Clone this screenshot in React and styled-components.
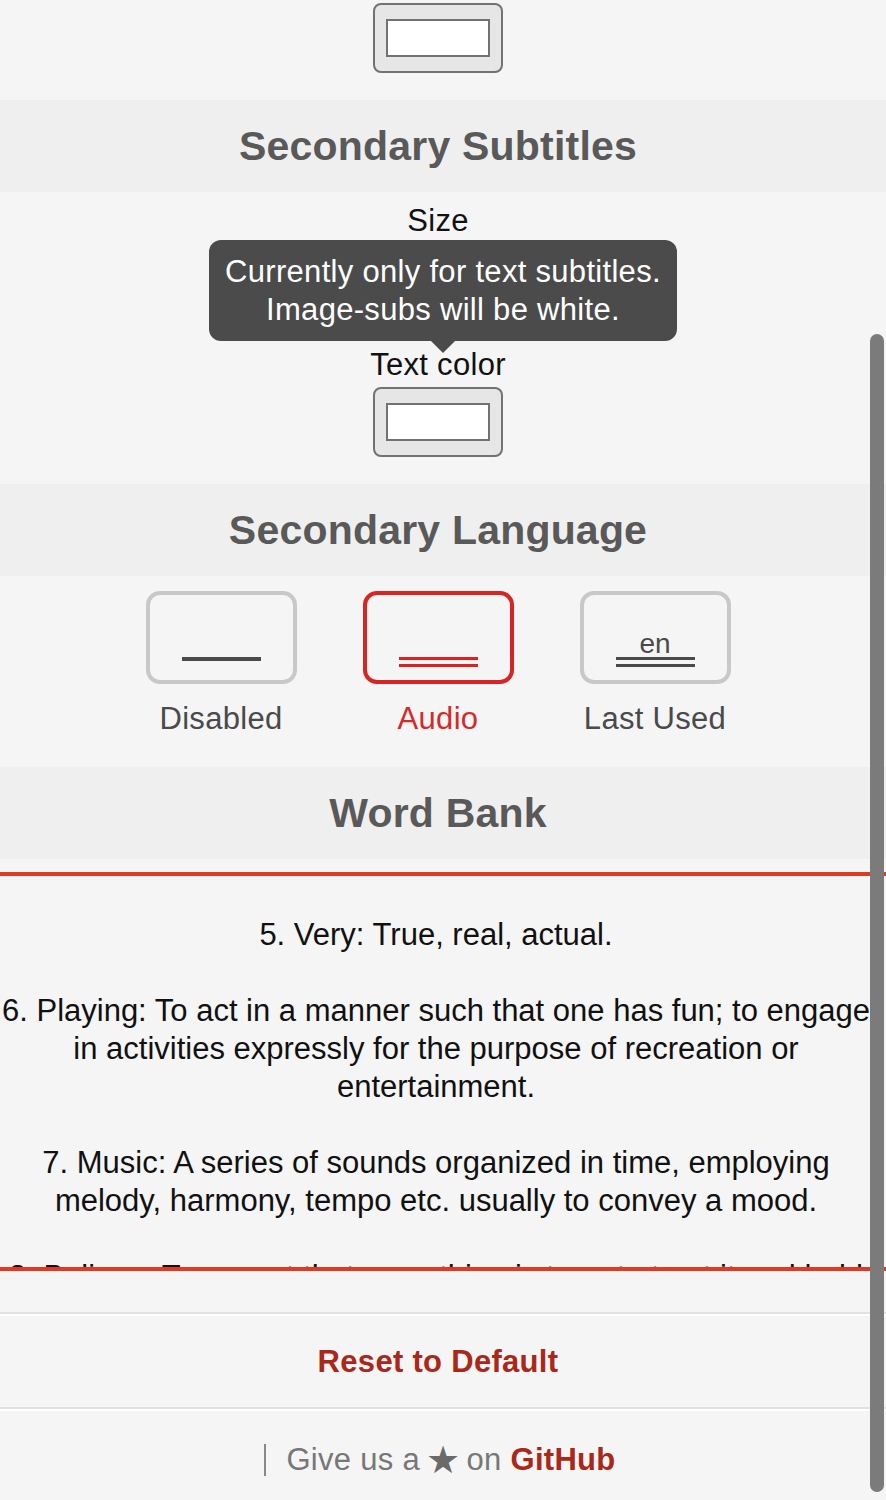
import styled, { createGlobalStyle } from "styled-components";

const GlobalStyle = createGlobalStyle`
  html, body {
    margin: 0;
    padding: 0;
    background: #f5f5f5;
    font-family: "Liberation Sans", Arial, sans-serif;
  }
`;

const Page = styled.div`
  position: relative;
  width: 886px;
  height: 1500px;
  overflow: hidden;
`;

const Section = styled.section`
  display: flex;
  flex-direction: column;
  align-items: center;
  padding: ${(p) => p.$pad || "0"};
  padding-right: 10px;
`;

const SectionHeader = styled.h2`
  margin: 0;
  height: 92px;
  display: flex;
  align-items: center;
  justify-content: center;
  padding-right: 10px;
  background: #efefef;
  color: #595959;
  font-size: 41px;
  letter-spacing: 0.2px;
  font-weight: 700;
`;

const Label = styled.div`
  font-size: 31px;
  letter-spacing: 0.3px;
  line-height: 34px;
  color: #111;
`;

const Swatch = styled.button`
  width: 130px;
  height: 70px;
  margin-top: ${(p) => p.$top || 0}px;
  padding: 0;
  display: flex;
  align-items: center;
  justify-content: center;
  background: #e6e6e6;
  border: 2px solid #727272;
  border-radius: 8px;
`;

const SwatchColor = styled.span`
  width: 104px;
  height: 38px;
  box-sizing: border-box;
  background: ${(p) => p.$color};
  border: 2px solid #727272;
`;

const SliderSlot = styled.div`
  position: relative;
  width: 100%;
  height: 110px;
`;

const Tooltip = styled.div`
  position: absolute;
  top: 2px;
  left: 209px;
  width: 468px;
  height: 101px;
  box-sizing: border-box;
  padding-top: 13px;
  background: #4b4b4b;
  border-radius: 12px;
  color: #fff;
  font-size: 31px;
  letter-spacing: 0.3px;
  line-height: 38px;
  text-align: center;

  &::after {
    content: "";
    position: absolute;
    left: 222px;
    bottom: -12px;
    border-left: 12px solid transparent;
    border-right: 12px solid transparent;
    border-top: 12px solid #4b4b4b;
  }
`;

const Options = styled.div`
  display: grid;
  grid-template-columns: repeat(3, 151px);
  column-gap: 66px;
`;

const Option = styled.div`
  display: flex;
  flex-direction: column;
  align-items: center;
  gap: 18px;
  color: ${(p) => (p.$active ? "#d42a2a" : "#4a4a4a")};
`;

const OptionBox = styled.div`
  width: 151px;
  height: 93px;
  box-sizing: border-box;
  border: 4px solid ${(p) => (p.$active ? "#d92424" : "#c8c8c8")};
  border-radius: 14px;
  display: flex;
  flex-direction: column;
  align-items: center;
  justify-content: flex-end;
  padding-bottom: 13px;
`;

const Lang = styled.span`
  font-size: 28px;
  line-height: 26px;
  color: #4a4a4a;
`;

const Line = styled.span`
  width: 79px;
  height: 10px;
  box-sizing: border-box;
  border-top: ${(p) => (p.$double ? "3px" : "4px")} solid ${(p) => p.$color};
  border-bottom: ${(p) => (p.$double ? `3px solid ${p.$color}` : "none")};
`;

const OptionLabel = styled.span`
  font-size: 31px;
  letter-spacing: 0.3px;
  line-height: 34px;
  white-space: nowrap;
`;

const WordList = styled.div`
  margin-top: 13px;
  height: 399px;
  box-sizing: border-box;
  overflow: hidden;
  border-top: 4px solid #e03a20;
  border-bottom: 4px solid #e03a20;
  padding: 40px 14px 0 0;
`;

const Word = styled.p`
  margin: 0 0 38px;
  font-size: 31px;
  line-height: 38px;
  color: #111;
  text-align: center;
`;

const Gap = styled.div`
  height: ${(p) => p.$h}px;
`;

const Divider = styled.hr`
  margin: 0;
  height: 0;
  border: none;
  border-top: 2px solid #e1e1e1;
  border-bottom: 2px solid #fff;
`;

const ResetButton = styled.button`
  display: block;
  width: 100%;
  height: 91px;
  padding: 0 10px 0 0;
  background: none;
  border: none;
  font-family: inherit;
  font-size: 31px;
  letter-spacing: 0.3px;
  font-weight: 700;
  color: #a9281a;
`;

const Footer = styled.footer`
  height: 88px;
  box-sizing: border-box;
  padding: 10px 6px 0 0;
  display: flex;
  align-items: center;
  justify-content: center;
  font-size: 31px;
  letter-spacing: 0.3px;
  color: #777;
`;

const Bar = styled.span`
  width: 2px;
  height: 32px;
  background: #888;
  margin-right: 20px;
`;

const Star = styled.span`
  font-size: 38px;
  line-height: 31px;
  color: #6a6a6a;
  margin: 0 6px;
`;

const Strong = styled.b`
  color: #a9281a;
  margin-left: 9px;
`;

const Scrollbar = styled.div`
  position: absolute;
  top: 334px;
  right: 2px;
  width: 14px;
  height: 1158px;
  border-radius: 7px;
  background: #7b7b7b;
`;

const words = [
  "5. Very: True, real, actual.",
  "6. Playing: To act in a manner such that one has fun; to engage in activities expressly for the purpose of recreation or entertainment.",
  "7. Music: A series of sounds organized in time, employing melody, harmony, tempo etc. usually to convey a mood.",
  "8. Believe: To accept that something is true, to trust it and hold it dear.",
];

export default function App() {
  return (
    <Page>
      <GlobalStyle />
      <Section $pad="3px 0 27px">
        <Swatch>
          <SwatchColor $color="#fff" />
        </Swatch>
      </Section>

      <SectionHeader>Secondary Subtitles</SectionHeader>
      <Section $pad="12px 0 27px">
        <Label>Size</Label>
        <SliderSlot>
          <Tooltip>
            Currently only for text subtitles.
            <br />
            Image-subs will be white.
          </Tooltip>
        </SliderSlot>
        <Label>Text color</Label>
        <Swatch $top={5}>
          <SwatchColor $color="#fff" />
        </Swatch>
      </Section>

      <SectionHeader>Secondary Language</SectionHeader>
      <Section $pad="15px 0 31px">
        <Options>
          <Option>
            <OptionBox>
              <Line $color="#4a4a4a" />
            </OptionBox>
            <OptionLabel>Disabled</OptionLabel>
          </Option>
          <Option $active>
            <OptionBox $active>
              <Line $double $color="#e02020" />
            </OptionBox>
            <OptionLabel>Audio</OptionLabel>
          </Option>
          <Option>
            <OptionBox>
              <Lang>en</Lang>
              <Line $double $color="#4a4a4a" />
            </OptionBox>
            <OptionLabel>Last Used</OptionLabel>
          </Option>
        </Options>
      </Section>

      <SectionHeader>Word Bank</SectionHeader>
      <WordList>
        {words.map((w) => (
          <Word key={w}>{w}</Word>
        ))}
      </WordList>

      <Gap $h={41} />
      <Divider />
      <ResetButton>Reset to Default</ResetButton>
      <Divider />
      <Footer>
        <Bar />
        Give us a<Star>★</Star>on <Strong>GitHub</Strong>
      </Footer>

      <Scrollbar />
    </Page>
  );
}
